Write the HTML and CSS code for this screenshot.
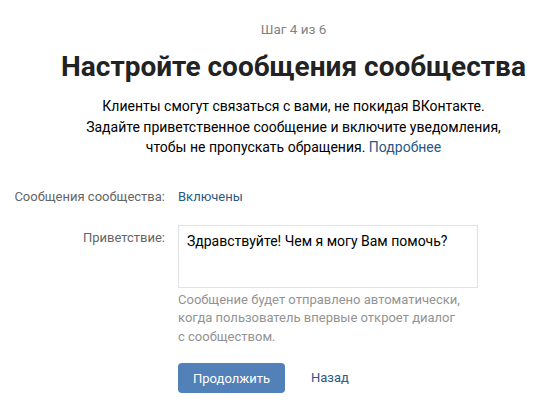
FILE: index.html
```html
<!DOCTYPE html>
<html lang="ru">
<head>
    <meta charset="UTF-8">
    <meta name="viewport" content="width=device-width, initial-scale=1.0">
    <title>Сообщения сообщества</title>
    <link rel="stylesheet" href="styles.css">
</head>
<body>
    <div class="wizard">
        <div class="head">
            <div class="step">Шаг 4 из 6</div>
            <h1 class="title">Настройте сообщения сообщества</h1>
            <p class="intro">
                Клиенты смогут связаться с вами, не покидая ВКонтакте.<br>
                Задайте приветственное сообщение и включите уведомления,<br>
                чтобы не пропускать обращения. <a href="#">Подробнее</a>
            </p>
        </div>

        <div class="form">
            <div class="label">Сообщения сообщества:</div>
            <div class="value"><a href="#">Включены</a></div>

            <div class="label label-top">Приветствие:</div>
            <div class="value">
                <textarea class="greeting">Здравствуйте! Чем я могу Вам помочь?</textarea>
                <p class="hint">
                    Сообщение будет отправлено автоматически,<br>
                    когда пользователь впервые откроет диалог<br>
                    с сообществом.
                </p>
                <div class="actions">
                    <button class="btn">Продолжить</button>
                    <a href="#" class="back">Назад</a>
                </div>
            </div>
        </div>
    </div>
</body>
</html>
```

FILE: styles.css
```css
body {
    margin: 0;
    font-family: 'Roboto', 'Liberation Sans', sans-serif;
    background-color: #fff;
    color: #000;
}
a {
    color: #2a5885;
    text-decoration: none;
}
.wizard {
    padding-top: 19px;
}
.head {
    margin-left: 28px;
    text-align: center;
}
.step {
    font-size: 13.5px;
    line-height: 20px;
    color: #828282;
}
.title {
    margin: 11px 0 0;
    font-size: 28px;
    line-height: 34px;
    font-weight: 700;
    color: #222;
}
.intro {
    margin: 12px 0 0;
    font-size: 14px;
    line-height: 20.5px;
}
.form {
    display: grid;
    grid-template-columns: 165px 300px;
    column-gap: 13px;
    row-gap: 18px;
    margin-top: 29px;
    font-size: 13px;
    line-height: 20px;
}
.label {
    text-align: right;
    color: #656565;
}
.label-top {
    padding-top: 3px;
}
.value a {
    font-size: 13px;
}
.greeting {
    display: block;
    box-sizing: border-box;
    width: 300px;
    height: 63px;
    margin: 0;
    padding: 5px 8px;
    border: 1px solid #dfe2e8;
    border-radius: 0;
    font-family: inherit;
    font-size: 14px;
    line-height: 20px;
    color: #000;
    resize: none;
}
.hint {
    margin: 3px 0 0;
    font-size: 13px;
    line-height: 18.5px;
    color: #939393;
}
.actions {
    display: flex;
    align-items: center;
    gap: 26px;
    margin-top: 17px;
}
.btn {
    width: 107px;
    height: 30px;
    padding: 0;
    background-color: #5181b8;
    color: #fff;
    border: none;
    border-radius: 4px;
    font-family: inherit;
    font-size: 13px;
    cursor: pointer;
}
.back {
    font-size: 13px;
}
```
